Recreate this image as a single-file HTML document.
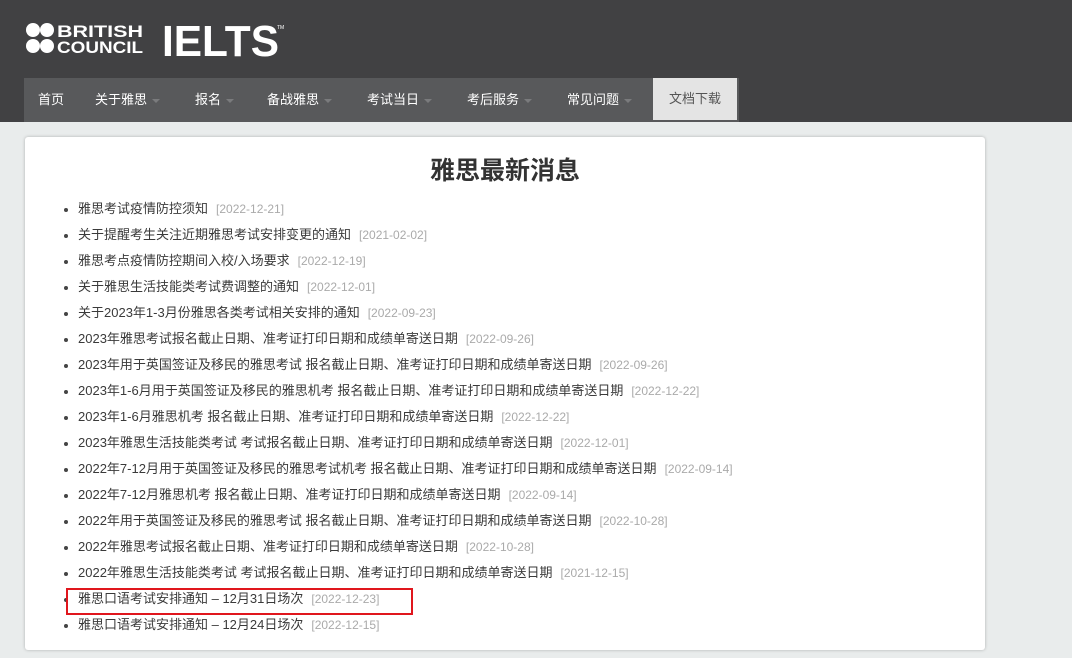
<!DOCTYPE html>
<html><head><meta charset="utf-8"><style>
*{margin:0;padding:0;box-sizing:border-box}
body{width:1072px;height:658px;overflow:hidden;background:#e9ecec;font-family:"Liberation Sans","Noto Sans CJK SC",sans-serif;position:relative}
.hdr{position:absolute;left:0;top:0;width:1072px;height:122px;background:#414143}
.logo{position:absolute;left:26px;top:22px;height:36px}
.nav{position:absolute;left:24px;top:78px;width:715px;height:44px;background:#58595b}
.nav span{position:absolute;top:11px;color:#fff;font-size:13px;white-space:nowrap}
.nav i{display:inline-block;width:0;height:0;border-left:4px solid transparent;border-right:4px solid transparent;border-top:4px solid #7a7b7d;margin-left:5px;vertical-align:middle}
.nav span.dl{left:629px;top:0;width:84px;height:42px;background:#e4e4e4;color:#555;font-size:13px;text-align:center;line-height:42px}
.card{position:absolute;left:25px;top:137px;width:960px;height:513px;background:#fff;border-radius:3px;box-shadow:0 0 3px rgba(0,0,0,.25)}
h1{position:absolute;left:0;width:960px;top:14px;text-align:center;font-size:25px;color:#333;font-weight:bold}
ul{position:absolute;left:53px;top:63px;list-style:none}
li{height:26px;font-size:13px;color:#3a3a3a;position:relative;white-space:nowrap;line-height:18px}
li:before{content:"";position:absolute;left:-14px;top:8px;width:4px;height:4px;border-radius:50%;background:#444}
li b{font-weight:normal;color:#aaa;margin-left:8px;font-size:12px}
.red{position:absolute;left:66px;top:588px;width:347px;height:27px;border:2px solid #e0161d}
</style></head><body>
<div class="hdr">
<svg class="logo" width="260" height="36" viewBox="0 0 260 36">
<circle cx="7" cy="8" r="7" fill="#fff"/><circle cx="21" cy="8" r="7" fill="#fff"/><circle cx="7" cy="24" r="7" fill="#fff"/><circle cx="21" cy="24" r="7" fill="#fff"/>
<text x="31" y="15" fill="#fff" font-family="Liberation Sans Narrow, Liberation Sans" font-weight="bold" font-size="17" textLength="86" lengthAdjust="spacingAndGlyphs">BRITISH</text>
<text x="31" y="31" fill="#fff" font-family="Liberation Sans Narrow, Liberation Sans" font-weight="bold" font-size="17" textLength="86" lengthAdjust="spacingAndGlyphs">COUNCIL</text>
<text x="136" y="34" fill="#fff" font-family="Liberation Sans" font-weight="bold" font-size="44" textLength="117" lengthAdjust="spacingAndGlyphs">IELTS</text>
<text x="251" y="7" fill="#fff" font-family="Liberation Sans" font-size="5">TM</text>
</svg>
<div class="nav">
<span style="left:14px">首页</span>
<span style="left:71px">关于雅思<i></i></span>
<span style="left:171px">报名<i></i></span>
<span style="left:243px">备战雅思<i></i></span>
<span style="left:343px">考试当日<i></i></span>
<span style="left:443px">考后服务<i></i></span>
<span style="left:543px">常见问题<i></i></span>
<span class="dl">文档下载</span>
</div></div>
<div class="card"><h1>雅思最新消息</h1>
<ul>
<li>雅思考试疫情防控须知<b>[2022-12-21]</b></li>
<li>关于提醒考生关注近期雅思考试安排变更的通知<b>[2021-02-02]</b></li>
<li>雅思考点疫情防控期间入校/入场要求<b>[2022-12-19]</b></li>
<li>关于雅思生活技能类考试费调整的通知<b>[2022-12-01]</b></li>
<li>关于2023年1-3月份雅思各类考试相关安排的通知<b>[2022-09-23]</b></li>
<li>2023年雅思考试报名截止日期、准考证打印日期和成绩单寄送日期<b>[2022-09-26]</b></li>
<li>2023年用于英国签证及移民的雅思考试 报名截止日期、准考证打印日期和成绩单寄送日期<b>[2022-09-26]</b></li>
<li>2023年1-6月用于英国签证及移民的雅思机考 报名截止日期、准考证打印日期和成绩单寄送日期<b>[2022-12-22]</b></li>
<li>2023年1-6月雅思机考 报名截止日期、准考证打印日期和成绩单寄送日期<b>[2022-12-22]</b></li>
<li>2023年雅思生活技能类考试 考试报名截止日期、准考证打印日期和成绩单寄送日期<b>[2022-12-01]</b></li>
<li>2022年7-12月用于英国签证及移民的雅思考试机考 报名截止日期、准考证打印日期和成绩单寄送日期<b>[2022-09-14]</b></li>
<li>2022年7-12月雅思机考 报名截止日期、准考证打印日期和成绩单寄送日期<b>[2022-09-14]</b></li>
<li>2022年用于英国签证及移民的雅思考试 报名截止日期、准考证打印日期和成绩单寄送日期<b>[2022-10-28]</b></li>
<li>2022年雅思考试报名截止日期、准考证打印日期和成绩单寄送日期<b>[2022-10-28]</b></li>
<li>2022年雅思生活技能类考试 考试报名截止日期、准考证打印日期和成绩单寄送日期<b>[2021-12-15]</b></li>
<li>雅思口语考试安排通知 – 12月31日场次<b>[2022-12-23]</b></li>
<li>雅思口语考试安排通知 – 12月24日场次<b>[2022-12-15]</b></li>
</ul></div>
<div class="red"></div>
</body></html>
